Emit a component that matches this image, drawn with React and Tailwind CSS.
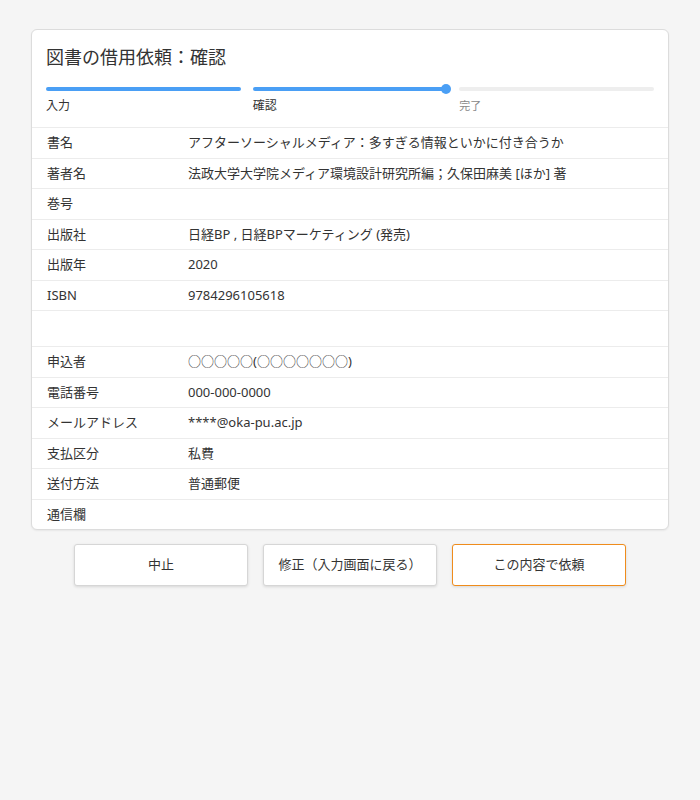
import React from "react";

const rows1 = [
  ["書名", "アフターソーシャルメディア：多すぎる情報といかに付き合うか"],
  ["著者名", "法政大学大学院メディア環境設計研究所編；久保田麻美 [ほか] 著"],
  ["巻号", ""],
  ["出版社", "日経BP , 日経BPマーケティング (発売)"],
  ["出版年", "2020"],
  ["ISBN", "9784296105618"],
];
const rows2 = [
  ["申込者", "○○○○○(○○○○○○○)"],
  ["電話番号", "000-000-0000"],
  ["メールアドレス", "****@oka-pu.ac.jp"],
  ["支払区分", "私費"],
  ["送付方法", "普通郵便"],
  ["通信欄", ""],
];

function Row({ label, value }) {
  return (
    <div className="flex items-center h-[30.5px] border-t border-[#ececec] px-[15px] text-[13px] text-[#333]">
      <div className="w-[141px] shrink-0">{label}</div>
      <div>{value}</div>
    </div>
  );
}

export default function App() {
  return (
    <div
      className="min-h-[800px] bg-[#f5f5f5] pt-[29px]"
      style={{ fontFamily: '"Noto Sans", "Noto Sans CJK JP", sans-serif' }}
    >
      <div className="mx-[31px] bg-white border border-[#dcdcdc] rounded-[6px] shadow-[0_1px_2px_rgba(0,0,0,0.06)] overflow-hidden">
        <div className="px-[14px] pt-[13px]">
          <h1 className="text-[18px] leading-[28px] text-[#333]">図書の借用依頼：確認</h1>
          <div className="grid grid-cols-3 gap-[12px] mt-[16px]">
            <div>
              <div className="h-[4px] rounded-full bg-[#4a9ff5]" />
              <div className="text-[12px] leading-[18px] mt-[6px] text-[#333]">入力</div>
            </div>
            <div>
              <div className="relative h-[4px] rounded-full bg-[#4a9ff5]">
                <div className="absolute right-[-4px] top-[-3px] w-[10px] h-[10px] rounded-full bg-[#4a9ff5]" />
              </div>
              <div className="text-[12px] leading-[18px] mt-[6px] text-[#333]">確認</div>
            </div>
            <div>
              <div className="h-[4px] rounded-full bg-[#eeeeee]" />
              <div className="text-[11px] leading-[18px] mt-[6px] text-[#888]">完了</div>
            </div>
          </div>
        </div>
        <div className="mt-[12px]">
          {rows1.map(([l, v]) => (
            <Row key={l} label={l} value={v} />
          ))}
          <div className="h-[36px] border-t border-[#ececec]" />
          {rows2.map(([l, v]) => (
            <Row key={l} label={l} value={v} />
          ))}
        </div>
      </div>
      <div className="flex justify-center gap-[15px] mt-[14px] text-[13px] text-[#333]">
        <button className="w-[174px] h-[42px] bg-white border border-[#d6d6d6] rounded-[3px] shadow-[0_1px_3px_rgba(0,0,0,0.12)]">中止</button>
        <button className="w-[174px] h-[42px] bg-white border border-[#d6d6d6] rounded-[3px] shadow-[0_1px_3px_rgba(0,0,0,0.12)]">修正（入力画面に戻る）</button>
        <button className="w-[174px] h-[42px] bg-white border border-[#ef8c1c] rounded-[3px] shadow-[0_1px_3px_rgba(0,0,0,0.12)]">この内容で依頼</button>
      </div>
    </div>
  );
}
